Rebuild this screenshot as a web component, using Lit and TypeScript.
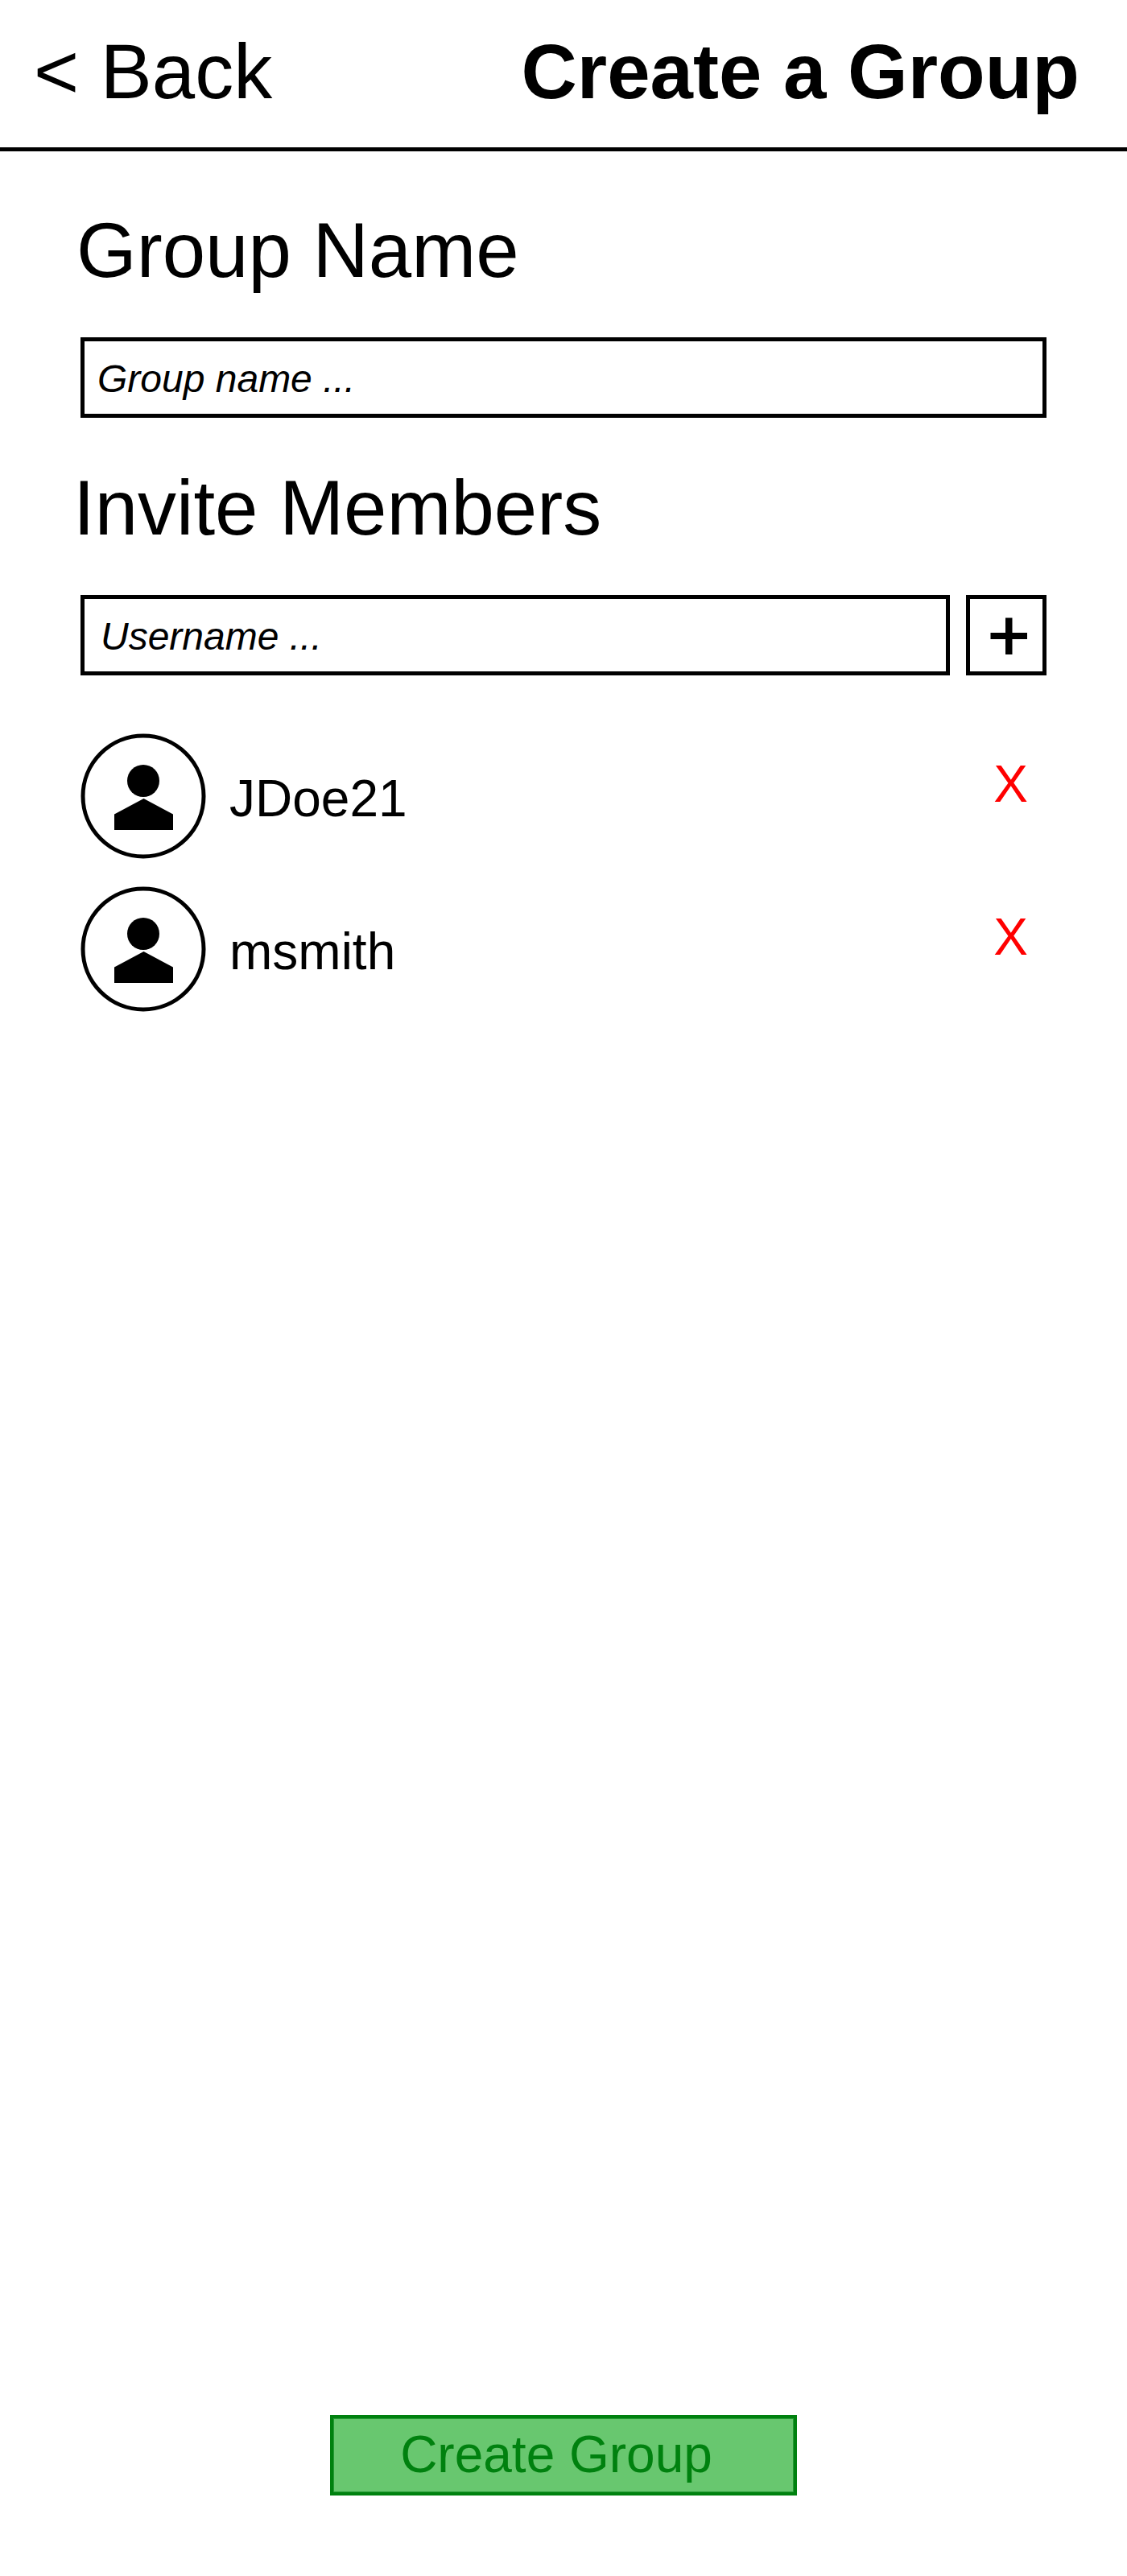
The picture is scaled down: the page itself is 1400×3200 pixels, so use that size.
import { LitElement, html, css } from "lit";
import { customElement, property, state } from "lit/decorators.js";

@customElement("member-row")
class MemberRow extends LitElement {
  @property() name = "";

  static styles = css`
    :host {
      display: block;
    }
    .row {
      display: flex;
      align-items: flex-start;
      height: 156px;
      font-size: 64px;
      line-height: 72px;
    }
    .avatar {
      display: block;
      flex: none;
      width: 156px;
      height: 156px;
    }
    .ring {
      fill: #fff;
      stroke: #000;
      stroke-width: 5;
    }
    .name {
      flex: 1;
      padding: 45px 0 0 29px;
    }
    .remove {
      margin: 27px 23px 0 0;
      padding: 0;
      border: 0;
      background: none;
      font: inherit;
      color: #f00;
    }
  `;

  render() {
    return html`
      <div class="row">
        <svg class="avatar" viewBox="0 0 156 156" aria-hidden="true">
          <circle class="ring" cx="78" cy="78" r="75" />
          <circle cx="78" cy="59" r="20" />
          <path d="M78.5 81L115 100.5V120H42V100.5Z" />
        </svg>
        <span class="name">${this.name}</span>
        <button class="remove" aria-label="Remove">X</button>
      </div>
    `;
  }
}

@customElement("app-root")
class AppRoot extends LitElement {
  @state() private members = ["JDoe21", "msmith"];

  static styles = css`
    :host {
      display: flex;
      flex-direction: column;
      box-sizing: border-box;
      height: 3200px;
      background: #fff;
      color: #000;
      font-family: "Liberation Sans", Arial, sans-serif;
    }
    .header {
      display: flex;
      justify-content: space-between;
      box-sizing: border-box;
      height: 188px;
      padding: 34px 59px 0 42px;
      border-bottom: 5px solid #000;
      font-size: 96px;
      line-height: 110px;
      white-space: nowrap;
    }
    .title {
      margin: 0;
      font-size: inherit;
      font-weight: bold;
    }
    .form {
      display: flex;
      flex-direction: column;
      flex: 1;
      padding: 68px 100px 0;
    }
    .label {
      margin: 0 0 0 -5px;
      height: 163px;
      font-size: 96px;
      line-height: 110px;
      font-weight: normal;
    }
    .invite {
      margin-left: -9px;
      margin-top: 57px;
    }
    .fields {
      display: flex;
      gap: 20px;
    }
    .field {
      flex: 1;
      min-width: 0;
      box-sizing: border-box;
      height: 100px;
      margin: 0;
      padding: 3px 0 0 16px;
      border: 5px solid #000;
      border-radius: 0;
      background: #fff;
      font: italic 48px "Liberation Sans", Arial, sans-serif;
    }
    .user {
      padding-left: 20px;
    }
    .field::placeholder {
      color: #000;
      opacity: 1;
    }
    .add {
      display: block;
      box-sizing: border-box;
      width: 100px;
      height: 100px;
      padding: 0;
      border: 5px solid #000;
      background: #fff;
    }
    .plus {
      display: block;
      width: 90px;
      height: 90px;
    }
    .members {
      display: flex;
      flex-direction: column;
      gap: 34px;
      margin-top: 72px;
    }
    .footer {
      display: flex;
      justify-content: center;
      padding-bottom: 100px;
    }
    .create {
      box-sizing: border-box;
      width: 580px;
      height: 100px;
      padding: 0 18px 3px 0;
      border: 4px solid #00810f;
      border-radius: 0;
      background: #68c76f;
      box-shadow: inset 0 0 0 1px #259a34;
      color: #00810f;
      font: 64px "Liberation Sans", Arial, sans-serif;
    }
  `;

  render() {
    return html`
      <header class="header">
        <span>&lt; Back</span>
        <h1 class="title">Create a Group</h1>
      </header>
      <main class="form">
        <h2 class="label">Group Name</h2>
        <div class="fields">
          <input class="field" placeholder="Group name ..." />
        </div>
        <h2 class="label invite">Invite Members</h2>
        <div class="fields">
          <input class="field user" placeholder="Username ..." />
          <button class="add" aria-label="Add">
            <svg class="plus" viewBox="0 0 90 90">
              <path d="M25.5 42H44V23.5H52.5V42H71V50H52.5V69H44V50H25.5Z" />
            </svg>
          </button>
        </div>
        <div class="members">
          ${this.members.map((m) => html`<member-row name=${m}></member-row>`)}
        </div>
      </main>
      <footer class="footer">
        <button class="create">Create Group</button>
      </footer>
    `;
  }
}
